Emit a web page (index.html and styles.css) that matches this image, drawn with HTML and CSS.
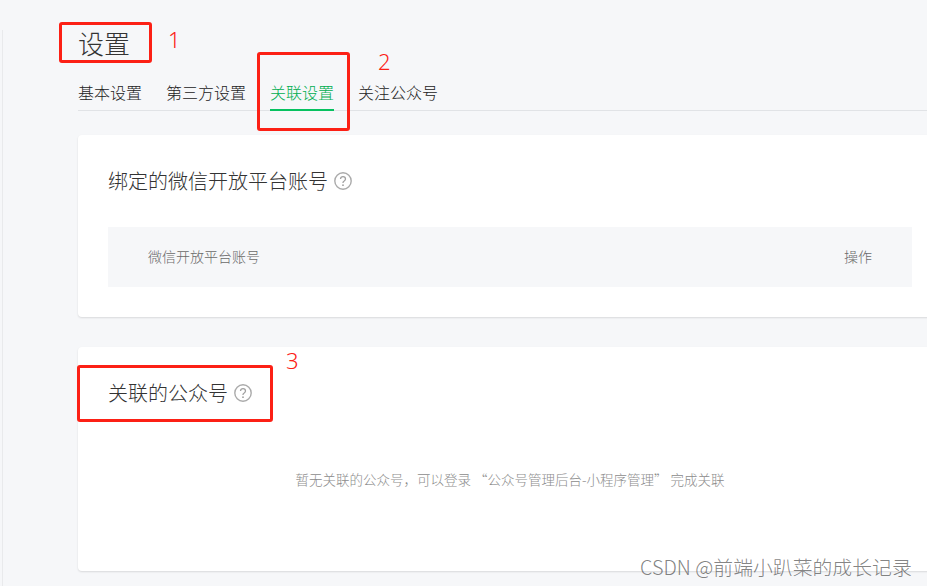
FILE: index.html
```html
<!DOCTYPE html>
<html lang="zh-CN">
<head>
<meta charset="utf-8">
<title>设置</title>
<link rel="stylesheet" href="styles.css">
</head>
<body>
<div class="page">
  <div class="rail"></div>
  <main class="main">
    <h1 class="page-title">设置</h1>
    <nav class="tabs">
      <a class="tab">基本设置</a>
      <a class="tab">第三方设置</a>
      <a class="tab active">关联设置</a>
      <a class="tab">关注公众号</a>
    </nav>
    <section class="card card-open">
      <h2 class="card-title">绑定的微信开放平台账号
        <svg class="help" viewBox="0 0 18 18" width="18" height="18"><circle cx="9" cy="9" r="8.2" fill="none" stroke="#ababab" stroke-width="1.4"/><path d="M6.5 7.1c0-1.5 1-2.4 2.5-2.4s2.5.9 2.5 2.3c0 1-.6 1.5-1.3 2-.8.5-1.2 1-1.2 1.8v.3" fill="none" stroke="#a0a0a0" stroke-width="1.3"/><circle cx="9" cy="13.2" r=".9" fill="#a0a0a0"/></svg>
      </h2>
      <div class="table-head">
        <span>微信开放平台账号</span>
        <span>操作</span>
      </div>
    </section>
    <section class="card card-linked">
      <h2 class="card-title">关联的公众号
        <svg class="help" viewBox="0 0 18 18" width="18" height="18"><circle cx="9" cy="9" r="8.2" fill="none" stroke="#ababab" stroke-width="1.4"/><path d="M6.5 7.1c0-1.5 1-2.4 2.5-2.4s2.5.9 2.5 2.3c0 1-.6 1.5-1.3 2-.8.5-1.2 1-1.2 1.8v.3" fill="none" stroke="#a0a0a0" stroke-width="1.3"/><circle cx="9" cy="13.2" r=".9" fill="#a0a0a0"/></svg>
      </h2>
      <p class="empty">暂无关联的公众号，可以登录 “公众号管理后台-小程序管理” 完成关联</p>
    </section>
  </main>
  <div class="mark box-1"></div>
  <div class="mark box-2"></div>
  <div class="mark box-3"></div>
  <span class="num num-1">1</span>
  <span class="num num-2">2</span>
  <span class="num num-3">3</span>
  <span class="watermark">CSDN @前端小趴菜的成长记录</span>
</div>
</body>
</html>
```
FILE: styles.css
```css
* { box-sizing: border-box; }
html, body { margin: 0; height: 100%; }
body {
  background: #f6f7f9;
  font-family: "Noto Sans CJK SC", "Liberation Sans", sans-serif;
  font-weight: 300;
  color: #353535;
  overflow: hidden;
}
.page {
  position: relative;
  width: 927px;
  height: 586px;
  overflow: hidden;
  display: flex;
}
.rail {
  flex: none;
  width: 3px;
  margin: 30px 0 0 0;
  border-right: 1px solid #e9eaec;
}
.main {
  flex: none;
  width: 864px;
  margin-left: 75px;
  padding-top: 23px;
}
.page-title {
  margin: 0;
  font-size: 26px;
  line-height: 40px;
  font-weight: 300;
  color: #333;
}
.tabs {
  display: flex;
  gap: 24px;
  margin-top: 14px;
  height: 34px;
  border-bottom: 1px solid #e1e3e6;
}
.tab {
  font-size: 16px;
  line-height: 30px;
  height: 34px;
  color: #222;
}
.tab.active {
  color: #00ad50;
  border-bottom: 2px solid #07c160;
}
.card {
  background: #fff;
  border-radius: 4px;
  box-shadow: 0 1px 2px rgba(0, 0, 0, .12);
  padding: 30px;
}
.card-open { margin-top: 24px; height: 182px; }
.card-linked { margin-top: 30px; height: 224px; }
.card-title {
  margin: 0;
  display: flex;
  align-items: center;
  gap: 6px;
  font-size: 20px;
  line-height: 32px;
  font-weight: 300;
  color: #333;
}
.table-head {
  margin-top: 30px;
  height: 60px;
  padding: 0 40px 2px;
  background: #f6f7f9;
  display: flex;
  align-items: center;
  justify-content: space-between;
  font-size: 14px;
  color: #6a6a6a;
}
.empty {
  margin: 60px 0 0;
  text-align: center;
  font-size: 13.5px;
  line-height: 20px;
  color: #8c8c8c;
}
.mark {
  position: absolute;
  border: 3px solid #fc2015;
  border-radius: 3px;
}
.box-1 { left: 59px; top: 22px; width: 93px; height: 41px; }
.box-2 { left: 257px; top: 52px; width: 93px; height: 79px; }
.box-3 { left: 77px; top: 365px; width: 196px; height: 57px; }
.num {
  position: absolute;
  font-family: "Noto Sans", "Liberation Sans", sans-serif;
  font-weight: 300;
  font-size: 22px;
  line-height: 24px;
  color: #fc2015;
}
.num-1 { left: 168px; top: 27px; }
.num-2 { left: 378px; top: 49px; }
.num-3 { left: 286px; top: 348px; }
.watermark {
  position: absolute;
  left: 640px;
  top: 553px;
  font-size: 19.85px;
  line-height: 28px;
  white-space: nowrap;
  color: rgba(60, 60, 60, .65);
}
```
